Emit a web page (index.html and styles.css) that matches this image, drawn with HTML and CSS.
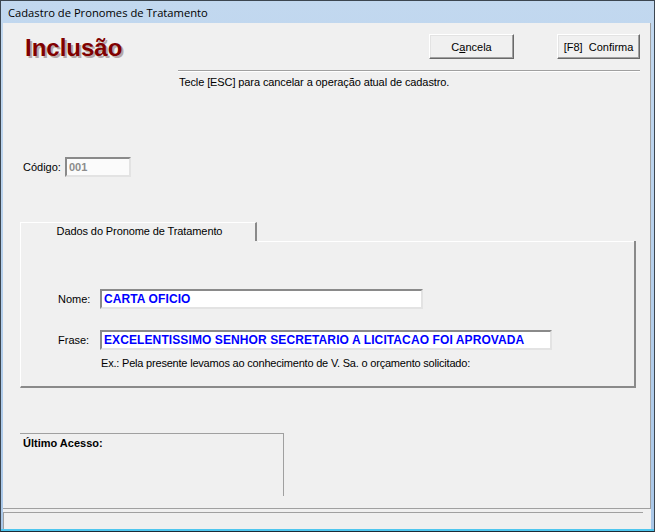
FILE: index.html
```
<!DOCTYPE html>
<html lang="pt-BR">
<head>
    <meta charset="UTF-8">
    <title>Cadastro de Pronomes de Tratamento</title>
    <link rel="stylesheet" href="styles.css">
</head>
<body>
    <div class="window">
        <div class="titlebar">Cadastro de Pronomes de Tratamento</div>

        <div class="client">
            <div class="form">
                <div class="header">
                    <h1 class="mode">Inclusão</h1>
                    <div class="actions">
                        <button class="btn btn-cancel">C<u>a</u>ncela</button>
                        <button class="btn btn-ok">[F8]&nbsp;&nbsp;Confirma</button>
                    </div>
                </div>

                <div class="separator"></div>
                <div class="hint">Tecle [ESC] para cancelar a operação atual de cadastro.</div>

                <div class="code-row">
                    <label class="label">Código:</label>
                    <div class="edit edit-code">001</div>
                </div>

                <div class="tabs">
                    <div class="tab-strip">
                        <div class="tab active">Dados do Pronome de Tratamento</div>
                    </div>
                    <div class="tab-panel">
                        <div class="row row-nome">
                            <label class="label">Nome:</label>
                            <div class="edit edit-nome">CARTA OFICIO</div>
                        </div>
                        <div class="row row-frase">
                            <label class="label">Frase:</label>
                            <div class="edit edit-frase">EXCELENTISSIMO SENHOR SECRETARIO A LICITACAO FOI APROVADA</div>
                        </div>
                        <div class="example">Ex.: Pela presente levamos ao conhecimento de V. Sa. o orçamento solicitado:</div>
                    </div>
                </div>

                <div class="last-access">Último Acesso:</div>
            </div>

            <div class="statusbar">
                <div class="status-panel"></div>
            </div>
        </div>
    </div>
</body>
</html>
```

FILE: styles.css
```
body {
    margin: 0;
    font-family: "Liberation Sans", Arial, sans-serif;
    font-size: 11px;
    color: #000;
    background-color: #f0f0f0;
}

.window {
    width: 655px;
    height: 532px;
    box-sizing: border-box;
    border: 1px solid #3c4650;
    background: linear-gradient(#c2d8ef, #a9c7e8);
    display: flex;
    flex-direction: column;
    padding: 0 3px 2px 2px;
    border-bottom-color: #1d2b36;
    box-shadow: inset 0 -2px 0 #4ec6ee;
}

.titlebar {
    height: 22px;
    line-height: 24px;
    padding-left: 5px;
    font-family: "Open Sans", "Liberation Sans", sans-serif;
    font-size: 11.2px;
    color: #000;
    flex-shrink: 0;
}

.client {
    flex-grow: 1;
    background-color: #f0f0f0;
    display: flex;
    flex-direction: column;
}

.form {
    height: 486px;
    box-sizing: border-box;
    border-right: 1px solid #a0a0a0;
    border-bottom: 1px solid #a0a0a0;
}

.header {
    display: flex;
    justify-content: space-between;
    align-items: flex-start;
    padding: 11px 10px 0 22px;
}

.mode {
    margin: 0;
    font-family: "Liberation Sans", Arial, sans-serif;
    font-size: 24px;
    font-weight: bold;
    line-height: 28px;
    color: #800000;
    text-shadow: 2px 2px 0 #b4a8a8;
}

.actions {
    display: flex;
    gap: 43px;
}

.btn {
    height: 25px;
    box-sizing: border-box;
    background-color: #f0f0f0;
    border: 1px solid;
    border-color: #fff #696969 #696969 #fff;
    box-shadow: inset -1px -1px 0 #a0a0a0, inset 1px 1px 0 #e3e3e3;
    font-family: "Liberation Sans", Arial, sans-serif;
    font-size: 11px;
    color: #000;
    padding: 0;
}

.btn-cancel {
    width: 85px;
}

.btn-ok {
    width: 83px;
}

.separator {
    margin: 8px 10px 0 175px;
    height: 1px;
    background-color: #a0a0a0;
    border-bottom: 1px solid #fff;
}

.hint {
    margin: 4px 0 0 176px;
    line-height: 13px;
    letter-spacing: -0.1px;
}

.code-row {
    display: flex;
    align-items: center;
    margin: 68px 0 0 20px;
}

.label {
    width: 42px;
}

.edit {
    height: 20px;
    box-sizing: border-box;
    border: 2px solid;
    border-color: #8a8a8a #e3e3e3 #e3e3e3 #8a8a8a;
    background-color: #fff;
    font-weight: bold;
    line-height: 16px;
    padding-left: 2px;
    white-space: nowrap;
    overflow: hidden;
}

.edit-code {
    width: 66px;
    color: #8c8c8c;
    background-color: #fbfbfb;
}

.tabs {
    margin: 45px 14px 0 17px;
}

.tab-strip {
    display: flex;
    height: 19px;
}

.tab {
    width: 237px;
    box-sizing: border-box;
    border-top: 1px solid #fff;
    border-left: 1px solid #fff;
    border-right: 2px solid;
    border-right-color: #8a8a8a;
    text-align: center;
    line-height: 17px;
    padding-left: 3px;
    letter-spacing: -0.1px;
}

.tab-panel {
    height: 147px;
    box-sizing: border-box;
    border: 1px solid #fff;
    border-right: 2px solid #8a8a8a;
    border-bottom: 2px solid #8a8a8a;
    border-top: none;
    position: relative;
    padding: 48px 0 0 37px;
}

.tab-panel::before {
    content: "";
    position: absolute;
    top: 0;
    left: 237px;
    right: 0;
    height: 1px;
    background-color: #fff;
}

.row {
    display: flex;
    align-items: center;
}

.row .label {
    width: 42px;
}

.row-frase {
    margin-top: 21px;
}

.edit-nome,
.edit-frase {
    color: #0000ff;
    font-size: 12px;
    letter-spacing: 0.1px;
}

.edit-nome {
    width: 323px;
}

.edit-frase {
    width: 452px;
}

.example {
    margin: 7px 0 0 43px;
    line-height: 13px;
    letter-spacing: -0.2px;
}

.last-access {
    margin: 45px 0 0 17px;
    width: 264px;
    height: 63px;
    box-sizing: border-box;
    border-top: 1px solid #a0a0a0;
    border-right: 1px solid #a0a0a0;
    font-weight: bold;
    padding: 3px 0 0 3px;
}

.statusbar {
    padding: 3px 8px 0 0;
    flex-grow: 1;
    display: flex;
}

.status-panel {
    flex-grow: 1;
    border-top: 1px solid #a0a0a0;
    border-left: 1px solid #a0a0a0;
}
```
